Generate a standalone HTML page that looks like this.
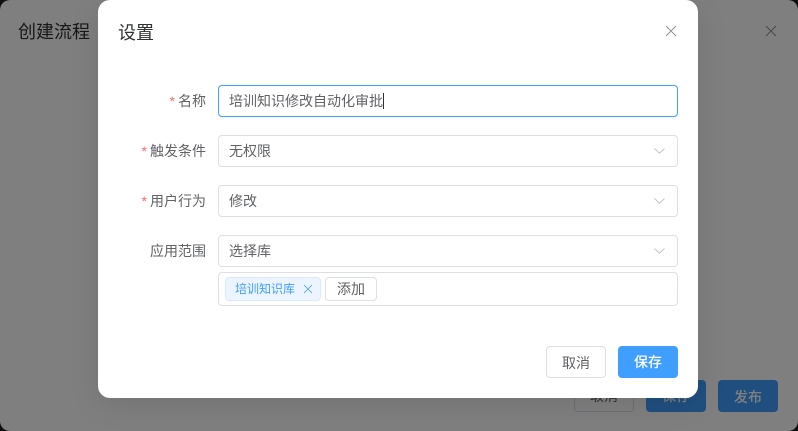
<!DOCTYPE html>
<html lang="zh">
<head>
<meta charset="utf-8">
<style>
*{box-sizing:border-box;margin:0;padding:0}
html,body{width:798px;height:431px;overflow:hidden;background:#1f1f1f;font-family:"Liberation Sans","Noto Sans CJK SC",sans-serif}
.abs{position:absolute}
#stage{position:relative;width:798px;height:431px;overflow:hidden}
#under{position:absolute;left:0;top:0;width:798px;height:431px;background:#fff;border-radius:10px}
#overlay{position:absolute;left:0;top:0;width:798px;height:431px;background:rgba(0,0,0,.5)}
#modal{position:absolute;left:98px;top:0;width:600px;height:398px;background:#fff;border-radius:12px;box-shadow:0 6px 30px rgba(0,0,0,.1)}
.t{position:absolute;white-space:nowrap;line-height:20px}
.label{font-size:14px;color:#606266;text-align:right;width:108px;left:98px}
.label b{color:#f56c6c;font-weight:400;margin-right:3px}
.field{position:absolute;left:218px;width:460px;height:32px;background:#fff;border:1px solid #dcdfe6;border-radius:4px}
.val{position:absolute;left:229px;font-size:14px;color:#606266;white-space:nowrap;line-height:20px}
.btn{position:absolute;border-radius:4px;font-size:14px;text-align:center;line-height:32px}
svg{position:absolute;overflow:visible}
</style>
</head>
<body>
<div id="stage">
  <div id="under">
    <div class="t" style="left:18px;top:21px;font-size:18px;line-height:22px;color:#303133">创建流程</div>
    <svg style="left:766px;top:26px" width="10" height="10" viewBox="0 0 10 10"><path d="M0 0L10 10M10 0L0 10" stroke="#909399" stroke-width="1" fill="none"/></svg>
    <div class="btn" style="left:574px;top:380px;width:60px;height:32px;background:#fff;border:1px solid #dcdfe6;color:#606266;line-height:30px">取消</div>
    <div class="btn" style="left:646px;top:380px;width:60px;height:32px;background:#409eff;color:#fff;font-weight:500">保存</div>
    <div class="btn" style="left:718px;top:380px;width:60px;height:32px;background:#409eff;color:#fff;font-weight:500;padding-top:1px">发布</div>
  </div>
  <div id="overlay"></div>
  <div id="modal"></div>

  <div class="t" style="left:118px;top:22px;font-size:18px;line-height:22px;color:#303133">设置</div>
  <svg style="left:666px;top:26px" width="10" height="10" viewBox="0 0 10 10"><path d="M0 0L10 10M10 0L0 10" stroke="#909399" stroke-width="1" fill="none"/></svg>

  <div class="t label" style="top:91px"><b>*</b>名称</div>
  <div class="field" style="top:85px;border-color:#409eff"></div>
  <div class="val" style="top:91px">培训知识修改自动化审批</div>
  <div class="abs" style="left:383px;top:93px;width:1px;height:16px;background:#303133"></div>

  <div class="t label" style="top:141px"><b>*</b>触发条件</div>
  <div class="field" style="top:135px"></div>
  <div class="val" style="top:141px">无权限</div>
  <svg style="left:654px;top:148px" width="11" height="6" viewBox="0 0 11 6"><path d="M0.5 0.5L5.5 5.2L10.5 0.5" stroke="#c0c4cc" stroke-width="1" fill="none"/></svg>

  <div class="t label" style="top:191px"><b>*</b>用户行为</div>
  <div class="field" style="top:185px"></div>
  <div class="val" style="top:191px">修改</div>
  <svg style="left:654px;top:198px" width="11" height="6" viewBox="0 0 11 6"><path d="M0.5 0.5L5.5 5.2L10.5 0.5" stroke="#c0c4cc" stroke-width="1" fill="none"/></svg>

  <div class="t label" style="top:241px">应用范围</div>
  <div class="field" style="top:235px"></div>
  <div class="val" style="top:241px">选择库</div>
  <svg style="left:654px;top:248px" width="11" height="6" viewBox="0 0 11 6"><path d="M0.5 0.5L5.5 5.2L10.5 0.5" stroke="#c0c4cc" stroke-width="1" fill="none"/></svg>

  <div class="field" style="top:272px;height:34px"></div>
  <div class="abs" style="left:225px;top:277px;width:96px;height:24px;background:#ecf5ff;border:1px solid #d9ecff;border-radius:4px"></div>
  <div class="t" style="left:235px;top:279px;font-size:12px;color:#409eff">培训知识库</div>
  <svg style="left:304px;top:285px" width="8" height="8" viewBox="0 0 8 8"><path d="M0 0L8 8M8 0L0 8" stroke="#409eff" stroke-width="0.8" fill="none"/></svg>
  <div class="btn" style="left:325px;top:277px;width:52px;height:24px;background:#fff;border:1px solid #dcdfe6;color:#606266;line-height:22px">添加</div>

  <div class="btn" style="left:546px;top:346px;width:60px;height:32px;background:#fff;border:1px solid #dcdfe6;color:#606266;line-height:32px">取消</div>
  <div class="btn" style="left:618px;top:346px;width:60px;height:32px;background:#409eff;color:#fff;font-weight:500;line-height:33px">保存</div>
</div>
</body>
</html>
